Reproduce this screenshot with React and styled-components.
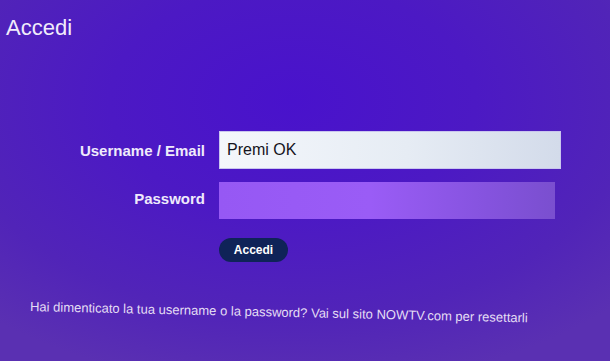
import styled, { createGlobalStyle } from "styled-components";

const GlobalStyle = createGlobalStyle`
  html, body {
    margin: 0;
    padding: 0;
  }
  body {
    font-family: "Liberation Sans", Arial, sans-serif;
  }
`;

const Schermo = styled.main`
  width: 610px;
  height: 361px;
  box-sizing: border-box;
  overflow: hidden;
  padding: 17px 0 0 0;
  display: flex;
  flex-direction: column;
  background: radial-gradient(
    ellipse 75% 80% at 48% 28%,
    #4912cc 0%,
    #4c19c4 40%,
    #5124b8 75%,
    #5a30b2 100%
  );
`;

const Titolo = styled.h1`
  margin: 0 0 0 6px;
  font-size: 22px;
  line-height: 22px;
  font-weight: 400;
  color: #f1ecfb;
`;

const Modulo = styled.form`
  margin-top: 92px;
  display: grid;
  grid-template-columns: 205px 342px;
  column-gap: 14px;
  row-gap: 13px;
  align-items: center;
`;

const Etichetta = styled.label`
  text-align: right;
  font-size: 15px;
  font-weight: 700;
  color: #efeafb;
  padding-bottom: ${(p) => (p.$alto ? "4px" : "0")};
`;

const Campo = styled.div`
  box-sizing: border-box;
  height: ${(p) => (p.$attivo ? "38px" : "37px")};
  width: ${(p) => (p.$attivo ? "342px" : "336px")};
  display: flex;
  align-items: center;
  padding-left: 7px;
  font-size: 16px;
  color: #15131c;
  background: ${(p) =>
    p.$attivo
      ? "linear-gradient(90deg, #f4f7fb 0%, #e6ecf4 55%, #d3dbea 100%)"
      : "linear-gradient(90deg, #9658f4 0%, #9a5cf6 45%, #8553de 80%, #7a4fcf 100%)"};
  border: ${(p) => (p.$attivo ? "1px solid #c9c6ee" : "none")};
`;

const Pulsante = styled.button`
  grid-column: 2;
  justify-self: start;
  margin-top: 6px;
  width: 69px;
  height: 24px;
  border: none;
  border-radius: 12px;
  background: #0f2358;
  color: #ffffff;
  font-family: "Liberation Sans", Arial, sans-serif;
  font-size: 12px;
  font-weight: 700;
  padding: 0;
`;

const Nota = styled.p`
  margin: 37px 0 0 30px;
  font-size: 13px;
  line-height: 16px;
  color: #e4ddf4;
  white-space: nowrap;
  transform: rotate(1.3deg);
  transform-origin: left center;
`;

export default function App() {
  return (
    <>
      <GlobalStyle />
      <Schermo>
        <Titolo>Accedi</Titolo>
        <Modulo>
          <Etichetta>Username / Email</Etichetta>
          <Campo $attivo>Premi OK</Campo>
          <Etichetta $alto>Password</Etichetta>
          <Campo />
          <Pulsante type="button">Accedi</Pulsante>
        </Modulo>
        <Nota>
          Hai dimenticato la tua username o la password? Vai sul sito NOWTV.com
          per resettarli
        </Nota>
      </Schermo>
    </>
  );
}
